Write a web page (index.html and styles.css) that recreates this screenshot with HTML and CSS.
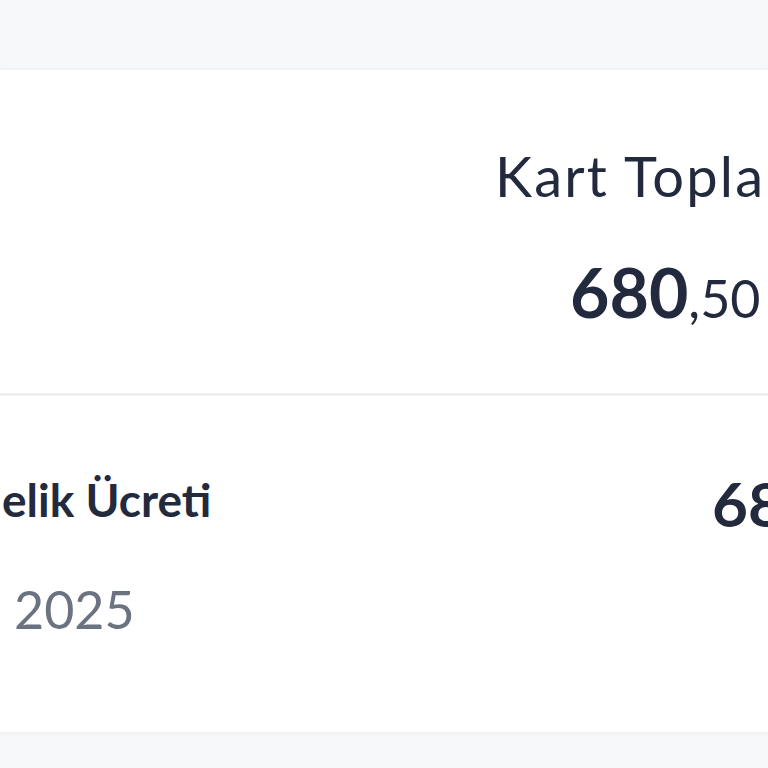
FILE: index.html
```html
<!DOCTYPE html>
<html lang="tr">
<head>
    <meta charset="UTF-8">
    <meta name="viewport" content="width=device-width, initial-scale=1.0">
    <title>Kart Özeti</title>
    <link rel="stylesheet" href="styles.css">
</head>
<body>
    <div class="top-bar"></div>

    <div class="card">
        <!-- Kart toplam -->
        <div class="summary">
            <div class="summary-col">
                <div class="summary-label">Kart Toplamı</div>
                <div class="summary-amount">680<span class="cents">,50 TL</span></div>
            </div>
        </div>

        <!-- Hareket satırı -->
        <div class="item">
            <div class="item-info">
                <div class="item-title">elik Ücreti</div>
                <div class="item-date">2025</div>
            </div>
            <div class="item-amount">680,50 TL</div>
        </div>
    </div>
</body>
</html>
```

FILE: styles.css
```css
body {
    font-family: Lato, "Open Sans", sans-serif;
    margin: 0;
    padding: 0;
    width: 768px;
    height: 768px;
    overflow: hidden;
    background-color: #f7f8fa;
    color: #232a3d;
}

.top-bar {
    height: 70px;
}

.card {
    background-color: #ffffff;
    box-shadow: 0 0 6px rgba(0, 0, 0, 0.06);
    height: 662px;
}

.summary {
    height: 326px;
    border-bottom: 3px solid #f0f0f1;
    box-sizing: border-box;
    display: flex;
    padding-left: 495px;
    padding-top: 78px;
}

.summary-col {
    white-space: nowrap;
}

.summary-label {
    font-size: 56px;
    line-height: 56px;
    letter-spacing: 2.2px;
}

.summary-amount {
    margin-top: 54px;
    font-size: 68px;
    line-height: 68px;
    font-weight: 700;
    margin-left: 75px;
}

.cents {
    font-size: 52px;
    font-weight: 400;
}

.item {
    display: flex;
    justify-content: space-between;
    white-space: nowrap;
    padding-top: 80px;
}

.item-info {
    padding-left: 2px;
}

.item-title {
    font-size: 46px;
    line-height: 48px;
    font-weight: 700;
}

.item-date {
    margin-top: 60px;
    padding-left: 12px;
    font-size: 52px;
    line-height: 50px;
    color: #6b7280;
}

.item-amount {
    font-size: 62px;
    line-height: 62px;
    font-weight: 700;
    margin-top: -4px;
    margin-right: -221px;
}
```
